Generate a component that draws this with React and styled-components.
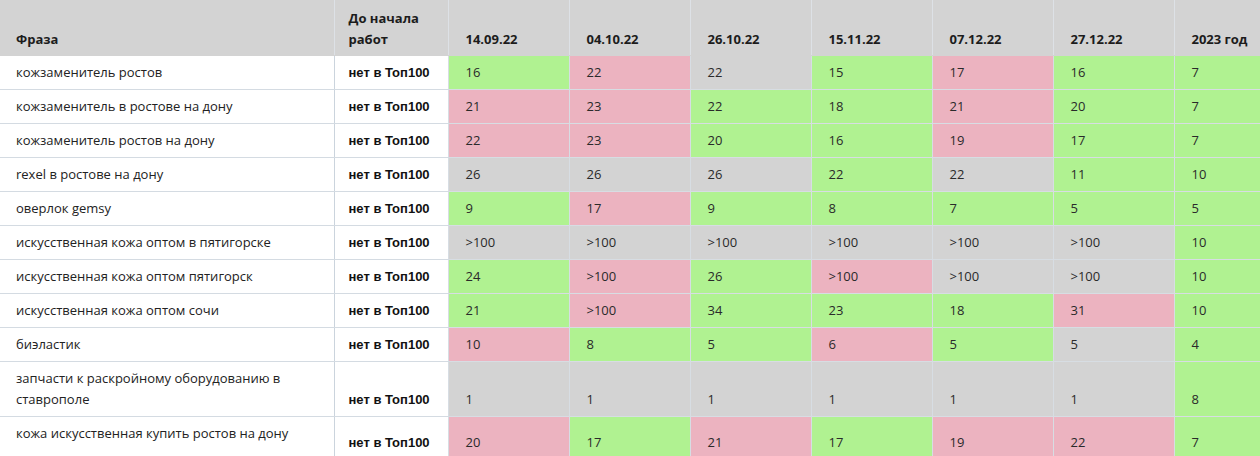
import React from 'react';
import styled, { createGlobalStyle } from 'styled-components';

const GlobalStyle = createGlobalStyle`
  html, body {
    margin: 0;
    padding: 0;
    background: #ffffff;
    overflow: hidden;
  }
  body {
    font-family: "Open Sans", "Liberation Sans", sans-serif;
    color: #222;
  }
`;

const Wrapper = styled.div`
  width: 1260px;
  height: 456px;
  overflow: hidden;
`;

const Table = styled.table`
  border-collapse: collapse;
  table-layout: fixed;
  width: 1294px;
  font-size: 13px;
`;

const HeadRow = styled.tr`
  height: 55px;
`;

const HeadCell = styled.th`
  background: #d3d3d3;
  font-weight: 700;
  text-align: left;
  vertical-align: bottom;
  line-height: 21px;
  padding: 6px ${(p) => p.$pad || '16px'} 5px;
  border-left: 1px solid #dde1e6;
  border-bottom: 1px solid #d3d3d3;
  color: #1c1c1c;
  &:first-child {
    border-left: none;
  }
`;

const PhraseCell = styled.td`
  background: #fff;
  vertical-align: ${(p) => (p.$tall ? 'top' : 'bottom')};
  line-height: 21px;
  padding: 6px 16px;
  border-bottom: 1px solid #d4dbe2;
  border-right: 1px solid #cbd4dd;
  color: #222;
`;

const StartCell = styled.td`
  background: #fff;
  vertical-align: bottom;
  line-height: 21px;
  padding: 6px 14px;
  font-family: "Liberation Sans", Arial, sans-serif;
  font-weight: 700;
  border-bottom: 1px solid #d4dbe2;
  color: #111;
  white-space: nowrap;
`;

const tones = {
  g: '#b0f291',
  r: '#ecb3c0',
  n: '#d3d3d3',
};

const ValueCell = styled.td`
  background: ${(p) => tones[p.$tone]};
  vertical-align: bottom;
  line-height: 21px;
  padding: 6px 17px;
  border-bottom: 1px solid #d7dde3;
  border-left: 1px solid #d7dde3;
  color: #2a2a2a;
`;

const Row = styled.tr`
  height: ${(p) => (p.$tall ? '43px' : '34px')};
`;

const dates = ['14.09.22', '04.10.22', '26.10.22', '15.11.22', '07.12.22', '27.12.22', '2023 год'];

const rows = [
  ['кожзаменитель ростов', [['16', 'g'], ['22', 'r'], ['22', 'n'], ['15', 'g'], ['17', 'r'], ['16', 'g'], ['7', 'g']]],
  ['кожзаменитель в ростове на дону', [['21', 'r'], ['23', 'r'], ['22', 'g'], ['18', 'g'], ['21', 'r'], ['20', 'g'], ['7', 'g']]],
  ['кожзаменитель ростов на дону', [['22', 'r'], ['23', 'r'], ['20', 'g'], ['16', 'g'], ['19', 'r'], ['17', 'g'], ['7', 'g']]],
  ['rexel в ростове на дону', [['26', 'n'], ['26', 'n'], ['26', 'n'], ['22', 'g'], ['22', 'n'], ['11', 'g'], ['10', 'g']]],
  ['оверлок gemsy', [['9', 'g'], ['17', 'r'], ['9', 'g'], ['8', 'g'], ['7', 'g'], ['5', 'g'], ['5', 'g']]],
  ['искусственная кожа оптом в пятигорске', [['>100', 'n'], ['>100', 'n'], ['>100', 'n'], ['>100', 'n'], ['>100', 'n'], ['>100', 'n'], ['10', 'g']]],
  ['искусственная кожа оптом пятигорск', [['24', 'g'], ['>100', 'r'], ['26', 'g'], ['>100', 'r'], ['>100', 'n'], ['>100', 'n'], ['10', 'g']]],
  ['искусственная кожа оптом сочи', [['21', 'g'], ['>100', 'r'], ['34', 'g'], ['23', 'g'], ['18', 'g'], ['31', 'r'], ['10', 'g']]],
  ['биэластик', [['10', 'r'], ['8', 'g'], ['5', 'g'], ['6', 'r'], ['5', 'g'], ['5', 'n'], ['4', 'g']]],
  ['запчасти к раскройному оборудованию в ставрополе', [['1', 'n'], ['1', 'n'], ['1', 'n'], ['1', 'n'], ['1', 'n'], ['1', 'n'], ['8', 'g']]],
  ['кожа искусственная купить ростов на дону', [['20', 'r'], ['17', 'g'], ['21', 'r'], ['17', 'g'], ['19', 'r'], ['22', 'r'], ['7', 'g']], true],
];

export default function App() {
  return (
    <Wrapper>
      <GlobalStyle />
      <Table>
        <colgroup>
          <col style={{ width: 334 }} />
          <col style={{ width: 114 }} />
          {dates.map((d) => (
            <col key={d} style={{ width: 121 }} />
          ))}
        </colgroup>
        <thead>
          <HeadRow>
            <HeadCell>Фраза</HeadCell>
            <HeadCell $pad="14px">До начала<br />работ</HeadCell>
            {dates.map((d) => (
              <HeadCell key={d} $pad="17px">{d}</HeadCell>
            ))}
          </HeadRow>
        </thead>
        <tbody>
          {rows.map(([phrase, values, tall]) => (
            <Row key={phrase} $tall={tall}>
              <PhraseCell $tall={tall}>{phrase}</PhraseCell>
              <StartCell>нет в Топ100</StartCell>
              {values.map(([v, tone], i) => (
                <ValueCell key={i} $tone={tone}>{v}</ValueCell>
              ))}
            </Row>
          ))}
        </tbody>
      </Table>
    </Wrapper>
  );
}
